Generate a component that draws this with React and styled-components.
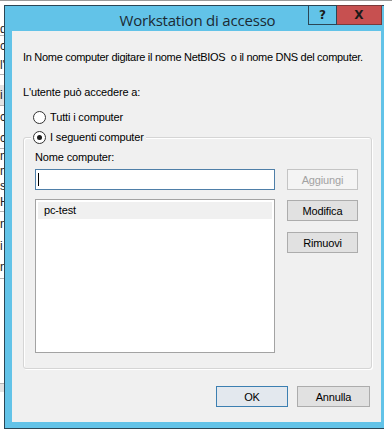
import React, { useState } from "react";
import styled, { createGlobalStyle } from "styled-components";

// Windows 8 style "Workstation di accesso" dialog, drawn over a cut-off window behind it.

const GlobalStyle = createGlobalStyle`
  html, body {
    margin: 0;
    padding: 0;
    background: #ffffff;
  }
  body {
    font-family: "Liberation Sans", Arial, sans-serif;
    font-size: 11px;
    letter-spacing: -0.15px;
    color: #000;
  }
`;

const Stage = styled.div`
  position: relative;
  width: 392px;
  height: 435px;
  overflow: hidden;
  background: #ffffff;
`;

// the window that is behind the dialog, only its edges peek out
const BackWindow = styled.div`
  display: flex;
  flex-direction: column;
  height: 100%;
`;

const BackTop = styled.div`
  height: 5px;
  border-top: 1px solid #9a9a9a;
  box-sizing: border-box;
  background: #ffffff;
`;

const BackList = styled.div`
  display: flex;
  flex-direction: column;
  width: 60px;
  padding-top: 18px;
`;

const BackRow = styled.div`
  height: ${(p) => p.h || 18}px;
  line-height: ${(p) => p.h || 18}px;
  font-size: 12px;
  color: #222;
  border-bottom: ${(p) => (p.line ? "1px solid #b5b5b5" : "none")};
  background: ${(p) => (p.shade ? "#e3e3e3" : "transparent")};
  white-space: nowrap;
  overflow: hidden;
`;

const Dialog = styled.div`
  position: absolute;
  left: 4px;
  top: 5px;
  width: 380px;
  height: 424px;
  box-sizing: border-box;
  background: #62c3e8;
  border: 1px solid #2b4655;
  border-right: none;
  display: flex;
  flex-direction: column;
  padding: 0 3px 6px 7px;
`;

const TitleBar = styled.div`
  position: relative;
  height: 25px;
  display: flex;
  align-items: center;
  justify-content: center;
  flex-shrink: 0;
`;

const Title = styled.div`
  font-family: "Open Sans", "Liberation Sans", sans-serif;
  font-size: 15px;
  letter-spacing: -0.2px;
  color: #1b2a33;
  margin-left: 2px;
  margin-top: 2px;
`;

const Caption = styled.div`
  position: absolute;
  top: -1px;
  right: -1px;
  display: flex;
`;

const CaptionButton = styled.div`
  height: 20px;
  box-sizing: border-box;
  display: flex;
  align-items: center;
  justify-content: center;
  font-family: "DejaVu Sans", "Liberation Sans", sans-serif;
  font-weight: bold;
  font-size: 12px;
  letter-spacing: 0;
  color: #1a1a1a;
  width: ${(p) => (p.close ? 45 : 29)}px;
  background: ${(p) => (p.close ? "#c75050" : "#62c3e8")};
  border: 1px solid ${(p) => (p.close ? "#7a3a3a" : "#2b4655")};
  border-left: ${(p) => (p.close ? "none" : "1px solid #2b4655")};
`;

const Client = styled.div`
  flex: 1;
  background: #f0f0f0;
  display: flex;
  flex-direction: column;
  padding: 18px 9px 0 11px;
`;

const Text = styled.div`
  line-height: 16px;
  white-space: pre;
  margin-top: ${(p) => p.mt || 0}px;
  letter-spacing: ${(p) => (p.tight ? "-0.3px" : "-0.15px")};
`;

const RadioRow = styled.label`
  display: flex;
  align-items: center;
  height: 16px;
  line-height: 16px;
  gap: 4px;
  margin-top: ${(p) => p.mt || 0}px;
  margin-left: ${(p) => p.ml || 0}px;
  cursor: default;
`;

const RadioDot = styled.span`
  width: 13px;
  height: 13px;
  box-sizing: border-box;
  border-radius: 50%;
  border: 1px solid #333;
  background: #fff;
  display: flex;
  align-items: center;
  justify-content: center;
  &::after {
    content: "";
    width: 5px;
    height: 5px;
    border-radius: 50%;
    background: #1a1a1a;
    display: ${(p) => (p.checked ? "block" : "none")};
  }
`;

const Group = styled.fieldset`
  margin: 4px 0 0 0;
  padding: 4px 11px 15px 11px;
  border: 1px solid #d5d5d5;
  border-radius: 3px;
  box-shadow: 1px 1px 0 #ffffff, inset 1px 1px 0 #ffffff;
  display: flex;
  flex-direction: column;
  min-width: 0;
`;

const Legend = styled.legend`
  padding: 0 2px;
  margin-left: -4px;
  background: #f0f0f0;
`;

const FieldRow = styled.div`
  display: flex;
  gap: 12px;
  margin-top: ${(p) => p.mt || 0}px;
`;

const Input = styled.div`
  width: 240px;
  height: 21px;
  box-sizing: border-box;
  border: 1px solid #4f7fa8;
  background: #fff;
  display: flex;
  align-items: center;
  padding-left: 2px;
`;

const Caret = styled.span`
  width: 1px;
  height: 13px;
  background: #000;
`;

const ListBox = styled.div`
  width: 240px;
  height: 154px;
  box-sizing: border-box;
  border: 1px solid #a3a3a3;
  background: #fff;
  padding: 2px 2px 0 2px;
`;

const ListItem = styled.div`
  height: 17px;
  line-height: 17px;
  padding-left: 6px;
  background: ${(p) => (p.selected ? "#f0f0f0" : "transparent")};
`;

const ButtonColumn = styled.div`
  display: flex;
  flex-direction: column;
  gap: 11px;
  padding-top: 1px;
`;

const Button = styled.button`
  width: ${(p) => p.w || 71}px;
  height: 21px;
  box-sizing: border-box;
  font-family: "Liberation Sans", Arial, sans-serif;
  font-size: 11px;
  letter-spacing: -0.15px;
  padding: 0;
  border: 1px solid ${(p) => (p.primary ? "#3c7fb1" : p.disabled ? "#c4c4c4" : "#acacac")};
  background: ${(p) =>
    p.primary ? "#e3e8ee" : p.disabled ? "#f4f4f4" : "#e1e1e1"};
  color: ${(p) => (p.disabled ? "#a2a2a2" : "#000")};
  border-radius: 0;
`;

const Footer = styled.div`
  display: flex;
  justify-content: flex-end;
  gap: 9px;
  margin: 17px 2px 0 0;
`;

const backRows = [
  { t: "d", h: 12, line: true },
  { t: "c", h: 20 },
  { t: "l'", h: 18, line: true },
  { t: "", h: 10 },
  { t: "i", h: 20, shade: true, line: true },
  { t: "c", h: 22 },
  { t: "c", h: 20, line: true },
  { t: "m", h: 15 },
  { t: "m", h: 15 },
  { t: "s", h: 14 },
  { t: "H", h: 18, line: true },
  { t: "n:", h: 24 },
  { t: "i", h: 20 },
  { t: "n", h: 22, line: true },
  { t: "", h: 104, line: true },
  { t: "", h: 8, shade: true },
];

const App = () => {
  const [mode, setMode] = useState("some");
  const computers = ["pc-test"];

  return (
    <Stage>
      <GlobalStyle />
      <BackWindow>
        <BackTop />
        <BackList>
          {backRows.map((r, i) => (
            <BackRow key={i} h={r.h} line={r.line} shade={r.shade}>
              {r.t}
            </BackRow>
          ))}
        </BackList>
      </BackWindow>

      <Dialog>
        <TitleBar>
          <Title>Workstation di accesso</Title>
          <Caption>
            <CaptionButton>?</CaptionButton>
            <CaptionButton close>X</CaptionButton>
          </Caption>
        </TitleBar>

        <Client>
          <Text tight>In Nome computer digitare il nome NetBIOS  o il nome DNS del computer.</Text>
          <Text mt={19}>L'utente può accedere a:</Text>

          <RadioRow mt={9} ml={10} onClick={() => setMode("all")}>
            <RadioDot checked={mode === "all"} />
            Tutti i computer
          </RadioRow>

          <Group>
            <Legend>
              <RadioRow onClick={() => setMode("some")}>
                <RadioDot checked={mode === "some"} />
                I seguenti computer
              </RadioRow>
            </Legend>

            <Text>Nome computer:</Text>
            <FieldRow mt={4}>
              <Input>
                <Caret />
              </Input>
              <Button disabled>Aggiungi</Button>
            </FieldRow>

            <FieldRow mt={9}>
              <ListBox>
                {computers.map((c, i) => (
                  <ListItem key={c} selected={i === 0}>
                    {c}
                  </ListItem>
                ))}
              </ListBox>
              <ButtonColumn>
                <Button>Modifica</Button>
                <Button>Rimuovi</Button>
              </ButtonColumn>
            </FieldRow>
          </Group>

          <Footer>
            <Button primary w={72}>OK</Button>
            <Button w={73}>Annulla</Button>
          </Footer>
        </Client>
      </Dialog>
    </Stage>
  );
};

export default App;
